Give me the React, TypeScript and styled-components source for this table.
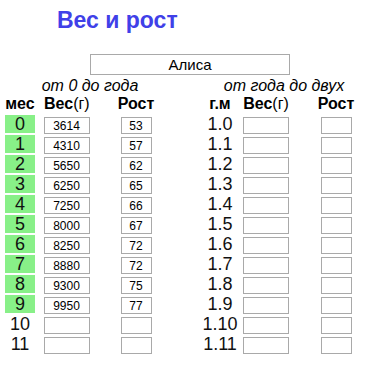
import React from "react";
import styled, { createGlobalStyle } from "styled-components";

const Global = createGlobalStyle`
  html, body { margin: 0; padding: 0; background: #fff; }
  body { font-family: "Liberation Sans", Arial, sans-serif; color: #000; }
`;

const Page = styled.div`
  width: 375px;
  height: 370px;
  overflow: hidden;
`;

const Title = styled.h1`
  margin: 0;
  padding: 7px 0 0 57px;
  height: 46px;
  box-sizing: border-box;
  font-size: 23px;
  line-height: 27px;
  font-weight: bold;
  color: #4040e8;
`;

const NameRow = styled.div`
  display: flex;
  padding-left: 90px;
  height: 23px;
  padding-top: 8px;
`;

const NameInput = styled.input`
  box-sizing: border-box;
  width: 200px;
  height: 21px;
  margin: 0;
  padding: 0;
  border: 1px solid #a9a9a9;
  font-family: "Liberation Sans", Arial, sans-serif;
  font-size: 15px;
  text-align: center;
  color: #000;
  outline: none;
`;

const SubRow = styled.div`
  display: flex;
  height: 17px;
`;

const Sub = styled.div<{ $left: number; $width: number }>`
  margin-left: ${(p) => p.$left}px;
  width: ${(p) => p.$width}px;
  text-align: center;
  font-style: italic;
  font-size: 16px;
  line-height: 17px;
  white-space: nowrap;
`;

const Tables = styled.div`
  display: flex;
  padding-left: 5px;
`;

const Table = styled.div<{ $cols: string; $ml: number }>`
  display: grid;
  grid-template-columns: ${(p) => p.$cols};
  grid-auto-rows: 20px;
  margin-left: ${(p) => p.$ml}px;
`;

const Head = styled.div`
  font-size: 16px;
  line-height: 20px;
  font-weight: bold;
  text-align: center;
  white-space: nowrap;
`;

const Thin = styled.span`
  font-weight: normal;
`;

const Label = styled.div<{ $green?: boolean }>`
  height: 18px;
  margin-top: 1px;
  font-size: 18px;
  line-height: 18px;
  text-align: center;
  background: ${(p) => (p.$green ? "#88f088" : "transparent")};
  color: #111;
`;

const CellWrap = styled.div`
  display: flex;
  justify-content: center;
  padding-top: 3px;
`;

const Box = styled.input<{ $w: number }>`
  box-sizing: border-box;
  width: ${(p) => p.$w}px;
  height: 17px;
  margin: 0;
  padding: 0;
  border: 1px solid #a9a9a9;
  font-family: "Liberation Sans", Arial, sans-serif;
  font-size: 12px;
  text-align: center;
  color: #000;
  background: #fff;
  outline: none;
`;

const left: [string, string, string][] = [
  ["0", "3614", "53"],
  ["1", "4310", "57"],
  ["2", "5650", "62"],
  ["3", "6250", "65"],
  ["4", "7250", "66"],
  ["5", "8000", "67"],
  ["6", "8250", "72"],
  ["7", "8880", "72"],
  ["8", "9300", "75"],
  ["9", "9950", "77"],
  ["10", "", ""],
  ["11", "", ""],
];

const right = ["1.0", "1.1", "1.2", "1.3", "1.4", "1.5", "1.6", "1.7", "1.8", "1.9", "1.10", "1.11"];

export default function App() {
  return (
    <Page>
      <Global />
      <Title>Вес и рост</Title>
      <NameRow>
        <NameInput defaultValue="Алиса" />
      </NameRow>
      <SubRow>
        <Sub $left={30} $width={120}>от 0 до года</Sub>
        <Sub $left={72} $width={124}>от года до двух</Sub>
      </SubRow>
      <Tables>
        <Table $cols="30px 9px 45px 27px 40px" $ml={0}>
          <Head>мес</Head>
          <span />
          <Head>
            Вес<Thin>(г)</Thin>
          </Head>
          <span />
          <Head>Рост</Head>
          {left.map(([m, w, h]) => (
            <React.Fragment key={m}>
              <Label $green={w !== ""}>{m}</Label>
              <span />
              <CellWrap>
                <Box $w={46} defaultValue={w} />
              </CellWrap>
              <span />
              <CellWrap>
                <Box $w={31} defaultValue={h} />
              </CellWrap>
            </React.Fragment>
          ))}
        </Table>
        <Table $cols="36px 5px 46px 27px 40px" $ml={46}>
          <Head>г.м</Head>
          <span />
          <Head>
            Вес<Thin>(г)</Thin>
          </Head>
          <span />
          <Head>Рост</Head>
          {right.map((m) => (
            <React.Fragment key={m}>
              <Label>{m}</Label>
              <span />
              <CellWrap>
                <Box $w={46} />
              </CellWrap>
              <span />
              <CellWrap>
                <Box $w={31} />
              </CellWrap>
            </React.Fragment>
          ))}
        </Table>
      </Tables>
    </Page>
  );
}
